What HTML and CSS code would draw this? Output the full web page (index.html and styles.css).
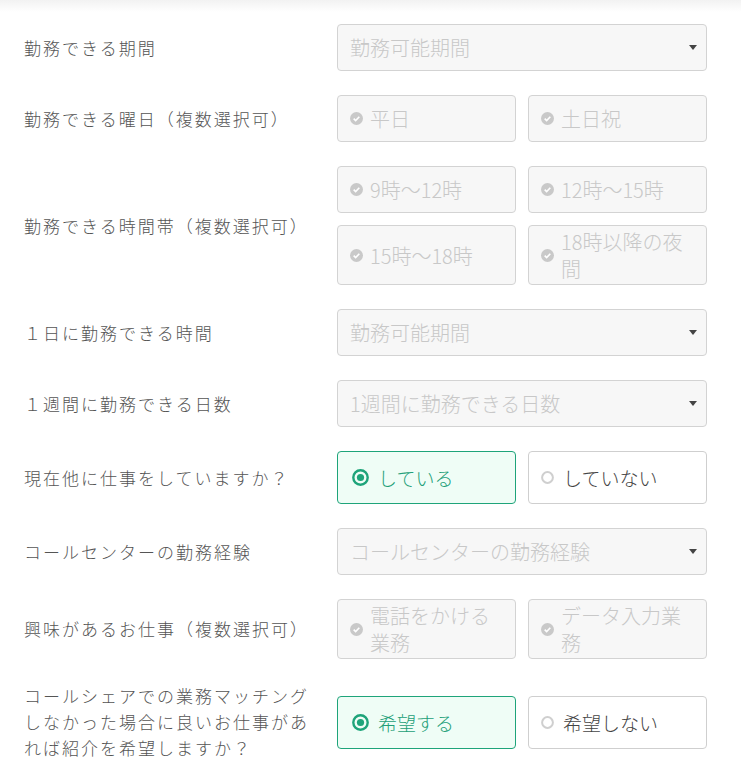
FILE: index.html
```html
<!DOCTYPE html>
<html lang="ja">
<head>
<meta charset="utf-8">
<link rel="stylesheet" href="styles.css">
</head>
<body>
<div class="shade"></div>
<form class="form">
  <div class="label">勤務できる期間</div>
  <div class="select"><span>勤務可能期間</span><i class="caret"></i></div>

  <div class="label">勤務できる曜日（複数選択可）</div>
  <div class="choices">
    <div class="chk"><svg class="ck" viewBox="0 0 12 12"><circle cx="6" cy="6" r="6" fill="#c9c9c9"/><path d="M3.4 6.1l1.8 1.8 3.4-3.5" fill="none" stroke="#fff" stroke-width="1.5"/></svg><span>平日</span></div>
    <div class="chk"><svg class="ck" viewBox="0 0 12 12"><circle cx="6" cy="6" r="6" fill="#c9c9c9"/><path d="M3.4 6.1l1.8 1.8 3.4-3.5" fill="none" stroke="#fff" stroke-width="1.5"/></svg><span>土日祝</span></div>
  </div>

  <div class="label">勤務できる時間帯（複数選択可）</div>
  <div class="choices">
    <div class="chk"><svg class="ck" viewBox="0 0 12 12"><circle cx="6" cy="6" r="6" fill="#c9c9c9"/><path d="M3.4 6.1l1.8 1.8 3.4-3.5" fill="none" stroke="#fff" stroke-width="1.5"/></svg><span>9時〜12時</span></div>
    <div class="chk"><svg class="ck" viewBox="0 0 12 12"><circle cx="6" cy="6" r="6" fill="#c9c9c9"/><path d="M3.4 6.1l1.8 1.8 3.4-3.5" fill="none" stroke="#fff" stroke-width="1.5"/></svg><span>12時〜15時</span></div>
    <div class="chk"><svg class="ck" viewBox="0 0 12 12"><circle cx="6" cy="6" r="6" fill="#c9c9c9"/><path d="M3.4 6.1l1.8 1.8 3.4-3.5" fill="none" stroke="#fff" stroke-width="1.5"/></svg><span>15時〜18時</span></div>
    <div class="chk"><svg class="ck" viewBox="0 0 12 12"><circle cx="6" cy="6" r="6" fill="#c9c9c9"/><path d="M3.4 6.1l1.8 1.8 3.4-3.5" fill="none" stroke="#fff" stroke-width="1.5"/></svg><span>18時以降の夜間</span></div>
  </div>

  <div class="label">１日に勤務できる時間</div>
  <div class="select"><span>勤務可能期間</span><i class="caret"></i></div>

  <div class="label">１週間に勤務できる日数</div>
  <div class="select"><span>1週間に勤務できる日数</span><i class="caret"></i></div>

  <div class="label">現在他に仕事をしていますか？</div>
  <div class="choices">
    <div class="radio on"><svg class="rd" viewBox="0 0 17 17"><circle cx="8.5" cy="8.5" r="7.2" fill="none" stroke="#1ea47a" stroke-width="2.4"/><circle cx="8.5" cy="8.5" r="3.6" fill="#1ea47a"/></svg><span>している</span></div>
    <div class="radio"><svg class="rd off" viewBox="0 0 13 13"><circle cx="6.5" cy="6.5" r="5.4" fill="none" stroke="#cfcfcf" stroke-width="2"/></svg><span>していない</span></div>
  </div>

  <div class="label">コールセンターの勤務経験</div>
  <div class="select"><span>コールセンターの勤務経験</span><i class="caret"></i></div>

  <div class="label">興味があるお仕事（複数選択可）</div>
  <div class="choices">
    <div class="chk"><svg class="ck" viewBox="0 0 12 12"><circle cx="6" cy="6" r="6" fill="#c9c9c9"/><path d="M3.4 6.1l1.8 1.8 3.4-3.5" fill="none" stroke="#fff" stroke-width="1.5"/></svg><span>電話をかける業務</span></div>
    <div class="chk"><svg class="ck" viewBox="0 0 12 12"><circle cx="6" cy="6" r="6" fill="#c9c9c9"/><path d="M3.4 6.1l1.8 1.8 3.4-3.5" fill="none" stroke="#fff" stroke-width="1.5"/></svg><span>データ入力業務</span></div>
  </div>

  <div class="label">コールシェアでの業務マッチングしなかった場合に良いお仕事があれば紹介を希望しますか？</div>
  <div class="choices">
    <div class="radio on"><svg class="rd" viewBox="0 0 17 17"><circle cx="8.5" cy="8.5" r="7.2" fill="none" stroke="#1ea47a" stroke-width="2.4"/><circle cx="8.5" cy="8.5" r="3.6" fill="#1ea47a"/></svg><span>希望する</span></div>
    <div class="radio"><svg class="rd off" viewBox="0 0 13 13"><circle cx="6.5" cy="6.5" r="5.4" fill="none" stroke="#cfcfcf" stroke-width="2"/></svg><span>希望しない</span></div>
  </div>
</form>
</body>
</html>
```

FILE: styles.css
```css
html, body {
  margin: 0;
  padding: 0;
  background: #fff;
}
body {
  font-family: "Noto Sans CJK JP", "Noto Sans", sans-serif;
  font-weight: 300;
  color: #555;
  width: 741px;
}
.shade {
  height: 12px;
  margin-bottom: -12px;
  background: linear-gradient(#f2f2f2, rgba(255,255,255,0));
}
.form {
  display: grid;
  grid-template-columns: 289px 370px;
  column-gap: 24px;
  row-gap: 24px;
  padding: 24px 34px 30px 24px;
  align-items: center;
}
.label {
  font-size: 17px;
  letter-spacing: 2px;
  line-height: 26px;
  color: #555;
}
.select {
  box-sizing: border-box;
  height: 47px;
  border: 1px solid #d3d3d3;
  border-radius: 4px;
  background: #f7f7f7;
  display: flex;
  align-items: center;
  justify-content: space-between;
  padding: 0 9px 0 12px;
  font-size: 20px;
  color: #c8c8c8;
}
.caret {
  width: 0;
  height: 0;
  border-left: 4px solid transparent;
  border-right: 4px solid transparent;
  border-top: 5px solid #444;
}
.choices {
  display: grid;
  grid-template-columns: 179px 179px;
  gap: 12px;
}
.chk {
  box-sizing: border-box;
  min-height: 47px;
  border: 1px solid #d3d3d3;
  border-radius: 4px;
  background: #f7f7f7;
  display: flex;
  align-items: center;
  gap: 7px;
  padding: 2px 12px;
  font-size: 20px;
  line-height: 27px;
  color: #c8c8c8;
}
.ck {
  width: 13px;
  height: 13px;
  flex: none;
}
.radio {
  box-sizing: border-box;
  height: 53px;
  border: 1px solid #cfcfcf;
  border-radius: 4px;
  background: #fff;
  display: flex;
  align-items: center;
  gap: 9px;
  padding: 0 12px;
  font-size: 19px;
  color: #444;
}
.radio.on {
  border-color: #1ea47a;
  background: #effdf6;
  color: #239f78;
  padding-left: 14px;
}
.rd {
  width: 17px;
  height: 17px;
  flex: none;
}
.rd.off {
  width: 13px;
  height: 13px;
}
```
